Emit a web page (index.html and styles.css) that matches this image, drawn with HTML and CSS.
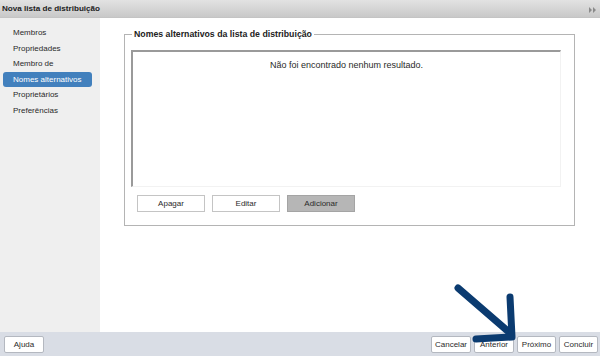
FILE: index.html
```html
<!DOCTYPE html>
<html lang="pt">
<head>
<meta charset="utf-8">
<title>Nova lista de distribuição</title>
<link rel="stylesheet" href="styles.css">
</head>
<body>
<div class="window">
  <div class="titlebar">
    <span class="title">Nova lista de distribuição</span>
    <svg class="collapse" width="7" height="6" viewBox="0 0 7 6"><path d="M0 0 L3 3 L0 6 Z M4 0 L7 3 L4 6 Z" fill="#8a8a8a"/></svg>
  </div>
  <div class="main">
    <ul class="sidebar">
      <li class="nav">Membros</li>
      <li class="nav">Propriedades</li>
      <li class="nav">Membro de</li>
      <li class="nav selected">Nomes alternativos</li>
      <li class="nav">Proprietários</li>
      <li class="nav">Preferências</li>
    </ul>
    <div class="content">
      <fieldset class="group">
        <legend class="legend">Nomes alternativos da lista de distribuição</legend>
        <div class="list">
          <div class="empty">Não foi encontrado nenhum resultado.</div>
        </div>
        <div class="actions">
          <button class="btn">Apagar</button>
          <button class="btn">Editar</button>
          <button class="btn disabled">Adicionar</button>
        </div>
      </fieldset>
    </div>
  </div>
  <div class="footer">
    <button class="fbtn wide">Ajuda</button>
    <div class="spacer"></div>
    <button class="fbtn wide">Cancelar</button>
    <button class="fbtn wide">Anterior</button>
    <button class="fbtn">Próximo</button>
    <button class="fbtn">Concluir</button>
  </div>
  <svg class="arrow" width="600" height="356" viewBox="0 0 600 356">
    <path d="M458 288 L510 333" stroke="#0b3b70" stroke-width="7" stroke-linecap="round" fill="none"/>
    <path d="M510 297 L512 337 L476 339" stroke="#0b3b70" stroke-width="7" stroke-linecap="round" stroke-linejoin="round" fill="none"/>
  </svg>
</div>
</body>
</html>
```

FILE: styles.css
```css
html, body {
  margin: 0;
  padding: 0;
}
body {
  font-family: "Liberation Sans", Arial, sans-serif;
  font-size: 8px;
  color: #2a2a2a;
}
.window {
  position: relative;
  width: 600px;
  height: 356px;
  display: flex;
  flex-direction: column;
  overflow: hidden;
}
.titlebar {
  height: 18px;
  flex: none;
  display: flex;
  align-items: center;
  justify-content: space-between;
  padding: 0 4px 0 2px;
  background: linear-gradient(#e2e2e2, #c9c9c9);
  border-bottom: 1px solid #c4c4c4;
  box-sizing: border-box;
}
.title {
  font-weight: bold;
  font-size: 8.1px;
  color: #222;
}
.collapse {
  display: block;
  margin-top: 2px;
}
.main {
  flex: 1;
  display: flex;
  min-height: 0;
}
.sidebar {
  width: 100px;
  flex: none;
  margin: 0;
  padding: 7px 0 0 0;
  list-style: none;
  background: #efefef;
  box-sizing: border-box;
}
.nav {
  height: 15.5px;
  line-height: 15.5px;
  padding-left: 10px;
  margin: 0 8px 0 3px;
  border-radius: 3px;
}
.nav.selected {
  background: #4280bd;
  color: #fff;
}
.content {
  flex: 1;
  background: #fff;
  padding: 10px 0 0 24px;
}
.group {
  width: 451px;
  box-sizing: border-box;
  margin: 0;
  padding: 10px 13px 13px 6px;
  border: 1px solid #b4b4b4;
  border-radius: 0;
}
.legend {
  font-weight: bold;
  font-size: 8.75px;
  color: #222;
  padding: 0 2px;
  margin-left: 1px;
  line-height: 12px;
}
.list {
  height: 137px;
  box-sizing: border-box;
  border-top: 2px solid #9a9a9a;
  border-left: 2px solid #9a9a9a;
  border-right: 1px solid #f2f2f2;
  border-bottom: 1px solid #f2f2f2;
  padding-top: 8px;
}
.empty {
  text-align: center;
  font-size: 9px;
}
.actions {
  display: flex;
  gap: 7px;
  margin: 8px 0 0 6px;
}
.btn {
  width: 68px;
  height: 17px;
  box-sizing: border-box;
  font-family: inherit;
  font-size: 8px;
  color: #2a2a2a;
  background: #fff;
  border: 1px solid #c4c4c4;
  padding: 0;
}
.btn.disabled {
  background: #b6b6b6;
  border-color: #a4a4a4;
}
.footer {
  height: 24px;
  flex: none;
  display: flex;
  align-items: center;
  gap: 3px;
  padding: 0 2px 0 4px;
  background: #d9dde5;
  box-sizing: border-box;
}
.spacer {
  flex: 1;
}
.fbtn {
  min-width: 39px;
  height: 17px;
  box-sizing: border-box;
  font-family: inherit;
  font-size: 8px;
  color: #2a2a2a;
  background: #fff;
  border: 1px solid #b4b8c0;
  border-radius: 2px;
  padding: 0 2px;
}
.fbtn.wide {
  min-width: 40px;
}
.arrow {
  position: absolute;
  left: 0;
  top: 0;
  pointer-events: none;
}
```
